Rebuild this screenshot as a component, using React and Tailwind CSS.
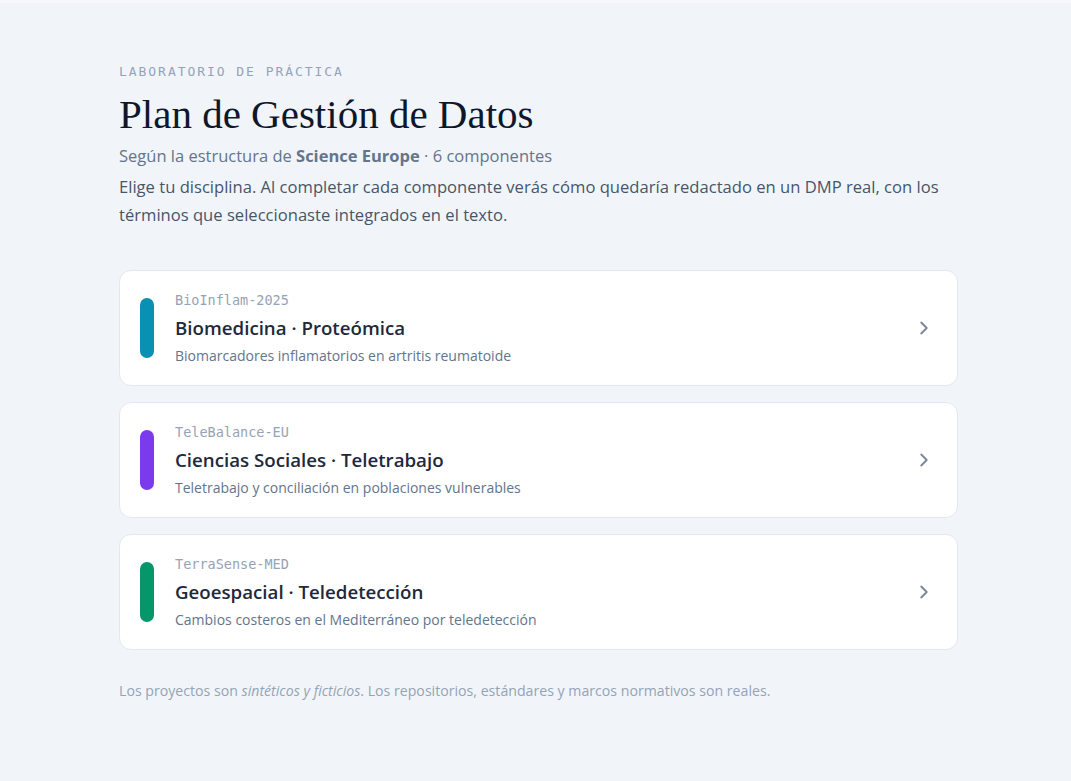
import React from "react";

const projects = [
  {
    code: "BioInflam-2025",
    title: "Biomedicina · Proteómica",
    desc: "Biomarcadores inflamatorios en artritis reumatoide",
    bar: "bg-[#0891b2]",
  },
  {
    code: "TeleBalance-EU",
    title: "Ciencias Sociales · Teletrabajo",
    desc: "Teletrabajo y conciliación en poblaciones vulnerables",
    bar: "bg-[#7c3aed]",
  },
  {
    code: "TerraSense-MED",
    title: "Geoespacial · Teledetección",
    desc: "Cambios costeros en el Mediterráneo por teledetección",
    bar: "bg-[#059669]",
  },
];

const sans = "font-['Open_Sans','Noto_Sans',sans-serif]";
const mono = "font-['DejaVu_Sans_Mono','Liberation_Mono',monospace]";

function Chevron() {
  return (
    <svg width="22" height="22" viewBox="0 0 24 24" fill="none" stroke="#7c8596" strokeWidth="2" strokeLinecap="round" strokeLinejoin="round">
      <path d="m9 18 6-6-6-6" />
    </svg>
  );
}

function ProjectCard({ p }) {
  return (
    <button className="flex h-[116px] w-full items-center rounded-xl border border-[#e2e8f0] bg-white pl-5 pr-[22px] text-left">
      <div className={`h-[60px] w-[14px] shrink-0 rounded-full ${p.bar}`} />
      <div className="ml-[21px] flex-1">
        <div className={`${mono} text-[13.5px] leading-[18px] text-[#94a3b8]`}>{p.code}</div>
        <div className={`${sans} mt-[6px] text-[18.7px] font-semibold leading-[26px] text-[#1e293b]`}>{p.title}</div>
        <div className={`${sans} mt-[5px] text-[14px] leading-[20px] text-[#64748b]`}>{p.desc}</div>
      </div>
      <Chevron />
    </button>
  );
}

export default function App() {
  return (
    <div className="min-h-[781px] border-t-[3px] border-[#f5f7fa] bg-[#f1f5f9]">
      <div className="ml-[119px] w-[839px] pb-16 pt-[60px]">
        <div className={`${mono} text-[13px] leading-[18px] tracking-[0.15em] text-[#94a3b8]`}>LABORATORIO DE PRÁCTICA</div>
        <h1 className="mt-[9px] font-['Liberation_Serif','DejaVu_Serif',serif] text-[41px] leading-[48px] text-[#0f172a]">Plan de Gestión de Datos</h1>
        <p className={`${sans} mt-[6px] text-[16.5px] leading-[24px] text-[#64748b]`}>
          Según la estructura de <span className="font-bold">Science Europe</span> · 6 componentes
        </p>
        <p className={`${sans} mt-[5px] text-[16.6px] leading-[28px] text-[#475569]`}>
          Elige tu disciplina. Al completar cada componente verás cómo quedaría redactado en un DMP real, con los términos que seleccionaste integrados en el texto.
        </p>
        <div className="mt-[41px] flex flex-col gap-[16px]">
          {projects.map((p) => (
            <ProjectCard key={p.code} p={p} />
          ))}
        </div>
        <p className={`${sans} mt-[31px] text-[14.15px] leading-[20px] text-[#94a3b8]`}>
          Los proyectos son <em>sintéticos y ficticios</em>. Los repositorios, estándares y marcos normativos son reales.
        </p>
      </div>
    </div>
  );
}
